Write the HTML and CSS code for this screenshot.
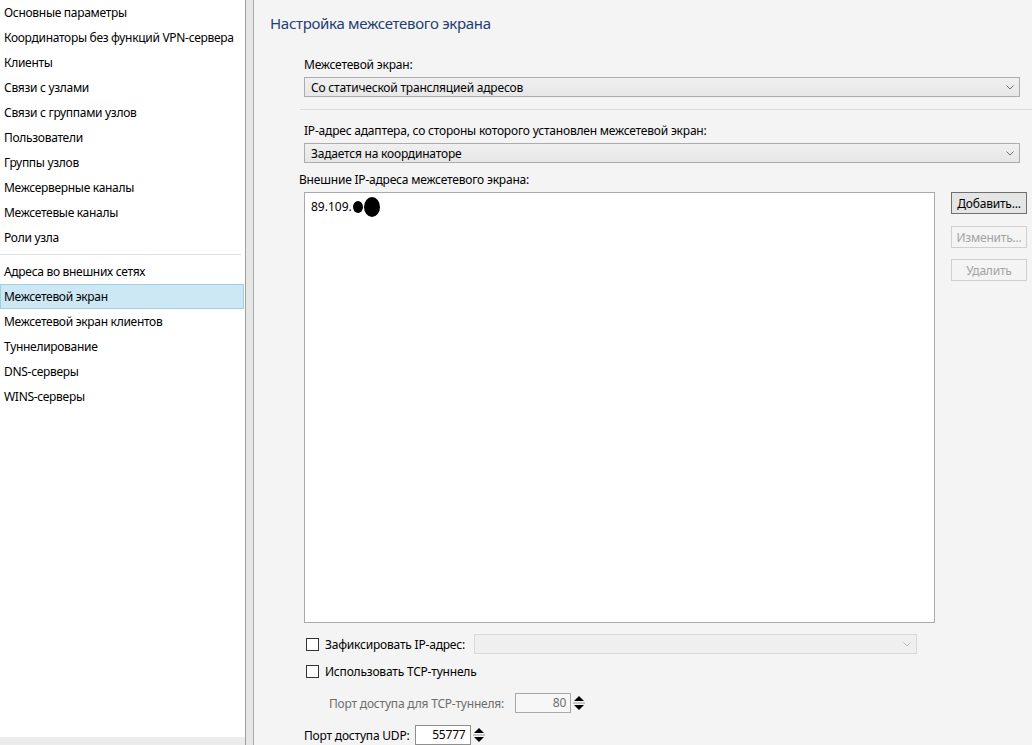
FILE: index.html
```html
<!DOCTYPE html>
<html lang="ru">
<head>
<meta charset="utf-8">
<title>Настройка межсетевого экрана</title>
<link rel="stylesheet" href="styles.css">
</head>
<body>
<div class="app">
  <aside class="nav">
    <ul class="nav-list">
      <li>Основные параметры</li>
      <li>Координаторы без функций VPN-сервера</li>
      <li>Клиенты</li>
      <li>Связи с узлами</li>
      <li>Связи с группами узлов</li>
      <li>Пользователи</li>
      <li>Группы узлов</li>
      <li>Межсерверные каналы</li>
      <li>Межсетевые каналы</li>
      <li>Роли узла</li>
    </ul>
    <div class="nav-sep"></div>
    <ul class="nav-list second">
      <li>Адреса во внешних сетях</li>
      <li class="selected">Межсетевой экран</li>
      <li>Межсетевой экран клиентов</li>
      <li>Туннелирование</li>
      <li>DNS-серверы</li>
      <li>WINS-серверы</li>
    </ul>
    <div class="nav-bottom"></div>
  </aside>
  <div class="splitter"></div>
  <main class="main">
    <h1 class="title">Настройка межсетевого экрана</h1>
    <div class="form">
      <div class="label">Межсетевой экран:</div>
      <div class="combo">
        <span>Со статической трансляцией адресов</span>
        <svg class="chev" width="8" height="5" viewBox="0 0 8 5"><path d="M0.5 0.5 L4 4 L7.5 0.5" fill="none" stroke="#707070" stroke-width="1"/></svg>
      </div>
    </div>
    <div class="hsep"></div>
    <div class="form">
      <div class="label l2">IP-адрес адаптера, со стороны которого установлен межсетевой экран:</div>
      <div class="combo">
        <span>Задается на координаторе</span>
        <svg class="chev" width="8" height="5" viewBox="0 0 8 5"><path d="M0.5 0.5 L4 4 L7.5 0.5" fill="none" stroke="#707070" stroke-width="1"/></svg>
      </div>
      <div class="label l3">Внешние IP-адреса межсетевого экрана:</div>
      <div class="list-row">
        <div class="listbox">
          <div class="entry">89.109.<span class="blot b1"></span><span class="blot b2"></span></div>
        </div>
        <div class="buttons">
          <button class="btn default">Добавить...</button>
          <button class="btn disabled">Изменить...</button>
          <button class="btn disabled">Удалить</button>
        </div>
      </div>
      <div class="row r1">
        <span class="check"></span>
        <span class="ctext">Зафиксировать IP-адрес:</span>
        <div class="combo dis">
          <svg class="chev" width="8" height="5" viewBox="0 0 8 5"><path d="M0.5 0.5 L4 4 L7.5 0.5" fill="none" stroke="#b8b8b8" stroke-width="1"/></svg>
        </div>
      </div>
      <div class="row r2">
        <span class="check"></span>
        <span class="ctext">Использовать TCP-туннель</span>
      </div>
      <div class="row r3">
        <span class="gray">Порт доступа для TCP-туннеля:</span>
        <div class="num dis-num">80</div>
        <div class="spin">
          <svg width="14" height="20" viewBox="0 0 14 20"><path d="M2 8 L7 3 L12 8 Z" fill="#000"/><rect x="1" y="9.5" width="12" height="1" fill="#999"/><path d="M2 12 L7 17 L12 12 Z" fill="#000"/></svg>
        </div>
      </div>
      <div class="row r4">
        <span class="plain">Порт доступа UDP:</span>
        <div class="num">55777</div>
        <div class="spin">
          <svg width="14" height="20" viewBox="0 0 14 20"><path d="M2 8 L7 3 L12 8 Z" fill="#000"/><rect x="1" y="9.5" width="12" height="1" fill="#999"/><path d="M2 12 L7 17 L12 12 Z" fill="#000"/></svg>
        </div>
      </div>
    </div>
  </main>
</div>
</body>
</html>
```
FILE: styles.css
```css
* { box-sizing: border-box; }
html, body { margin: 0; padding: 0; }
body {
  width: 1032px;
  height: 745px;
  overflow: hidden;
  font-family: "Noto Sans", "Open Sans", sans-serif;
  font-size: 12px;
  color: #000;
  background: #f5f5f5;
}
.app {
  display: flex;
  height: 745px;
}
.nav {
  flex: none;
  width: 246px;
  background: #fff;
  display: flex;
  flex-direction: column;
  border-right: 1px solid #a0a0a0;
}
.nav-list {
  list-style: none;
  margin: 0;
  padding: 0;
}
.nav-list li {
  height: 25px;
  line-height: 25px;
  padding-left: 4px;
  white-space: nowrap;
  letter-spacing: -0.3px;
}
.nav-list li.selected {
  background: #cce8f4;
  border: 1px solid #9dcfe6;
  padding-left: 3px;
  line-height: 23px;
  margin-right: 1px;
}
.nav-sep {
  height: 1px;
  background: #e0e0e0;
  margin: 4px 4px 4px 0;
}
.nav-bottom {
  margin-top: auto;
  height: 8px;
  background: #ececec;
}
.splitter {
  width: 8px;
  flex: none;
  background: #e6e6e6;
  border-right: 1px solid #a8a8a8;
}
.main {
  flex: 1;
  padding: 13px 0 0 16px;
  background: #f4f4f4;
  display: flex;
  flex-direction: column;
}
.title {
  margin: 0;
  font-weight: normal;
  font-size: 15px;
  line-height: 20px;
  color: #1d3f72;
  letter-spacing: -0.3px;
}
.form {
  padding-left: 34px;
  padding-right: 12px;
  width: 766px;
}
.label {
  margin-top: 24px;
  line-height: 16px;
  height: 16px;
  margin-bottom: 4px;
  letter-spacing: -0.2px;
}
.label.l2 { margin-top: 13px; }
.label.l3 { margin-top: 9px; margin-left: -5px; }
.combo {
  height: 20px;
  width: 716px;
  border: 1px solid #acacac;
  background: linear-gradient(#f0f0f0, #e7e7e7);
  display: flex;
  align-items: center;
  padding-left: 6px;
  padding-right: 5px;
  letter-spacing: -0.2px;
}
.combo span { flex: 1; }
.combo .chev { margin-left: auto; }
.hsep {
  height: 1px;
  width: 736px;
  background: #dcdcdc;
  margin: 12px 0 0 30px;
}
.list-row {
  display: flex;
  align-items: flex-start;
}
.listbox {
  flex: none;
  width: 631px;
  height: 431px;
  background: #fff;
  border: 1px solid #a9a9a9;
  padding: 4px 6px;
}
.entry {
  line-height: 16px;
  display: flex;
  align-items: center;
}
.blot {
  display: inline-block;
  background: #000;
  border-radius: 50%;
}
.b1 { width: 10px; height: 12px; margin-left: 1px; }
.b2 { width: 16px; height: 20px; margin-left: 1px; }
.buttons {
  flex: none;
  margin-left: 16px;
  display: flex;
  flex-direction: column;
  gap: 12px;
}
.btn {
  width: 76px;
  height: 22px;
  font-family: inherit;
  font-size: 12px;
  padding: 0;
  background: #e1e1e1;
  border: 1px solid #adadad;
  color: #000;
  letter-spacing: -0.2px;
}
.btn.default { border: 1px solid #707070; background: #e5e5e5; }
.btn.disabled {
  background: #f4f4f4;
  border: 1px solid #cfcfcf;
  color: #a3a3a3;
}
.buttons .btn:last-child { margin-top: -1px; }
.row {
  display: flex;
  align-items: center;
  height: 20px;
  letter-spacing: -0.2px;
}
.r1 { margin-top: 11px; }
.r2 { margin-top: 7px; }
.r3 { margin-top: 12px; }
.r4 { margin-top: 12px; }
.check {
  width: 13px;
  height: 13px;
  border: 1px solid #333;
  background: #fff;
  margin-left: 2px;
  flex: none;
}
.ctext { margin-left: 6px; }
.combo.dis {
  width: 443px;
  margin-left: 9px;
  background: #efefef;
  border-color: #d9d9d9;
}
.gray { color: #6d6d6d; margin-left: 25px; }
.plain { margin-left: 0; }
.num {
  width: 56px;
  height: 20px;
  border: 1px solid #8f8f8f;
  background: #fff;
  text-align: right;
  padding-right: 4px;
  line-height: 18px;
}
.r3 .num { margin-left: 11px; }
.r4 .num { margin-left: 5px; }
.dis-num { color: #6d6d6d; background: #f7f7f7; border-color: #a8a8a8; }
.spin {
  width: 14px;
  height: 20px;
  margin-left: 1px;
}
.spin svg { display: block; }
```
